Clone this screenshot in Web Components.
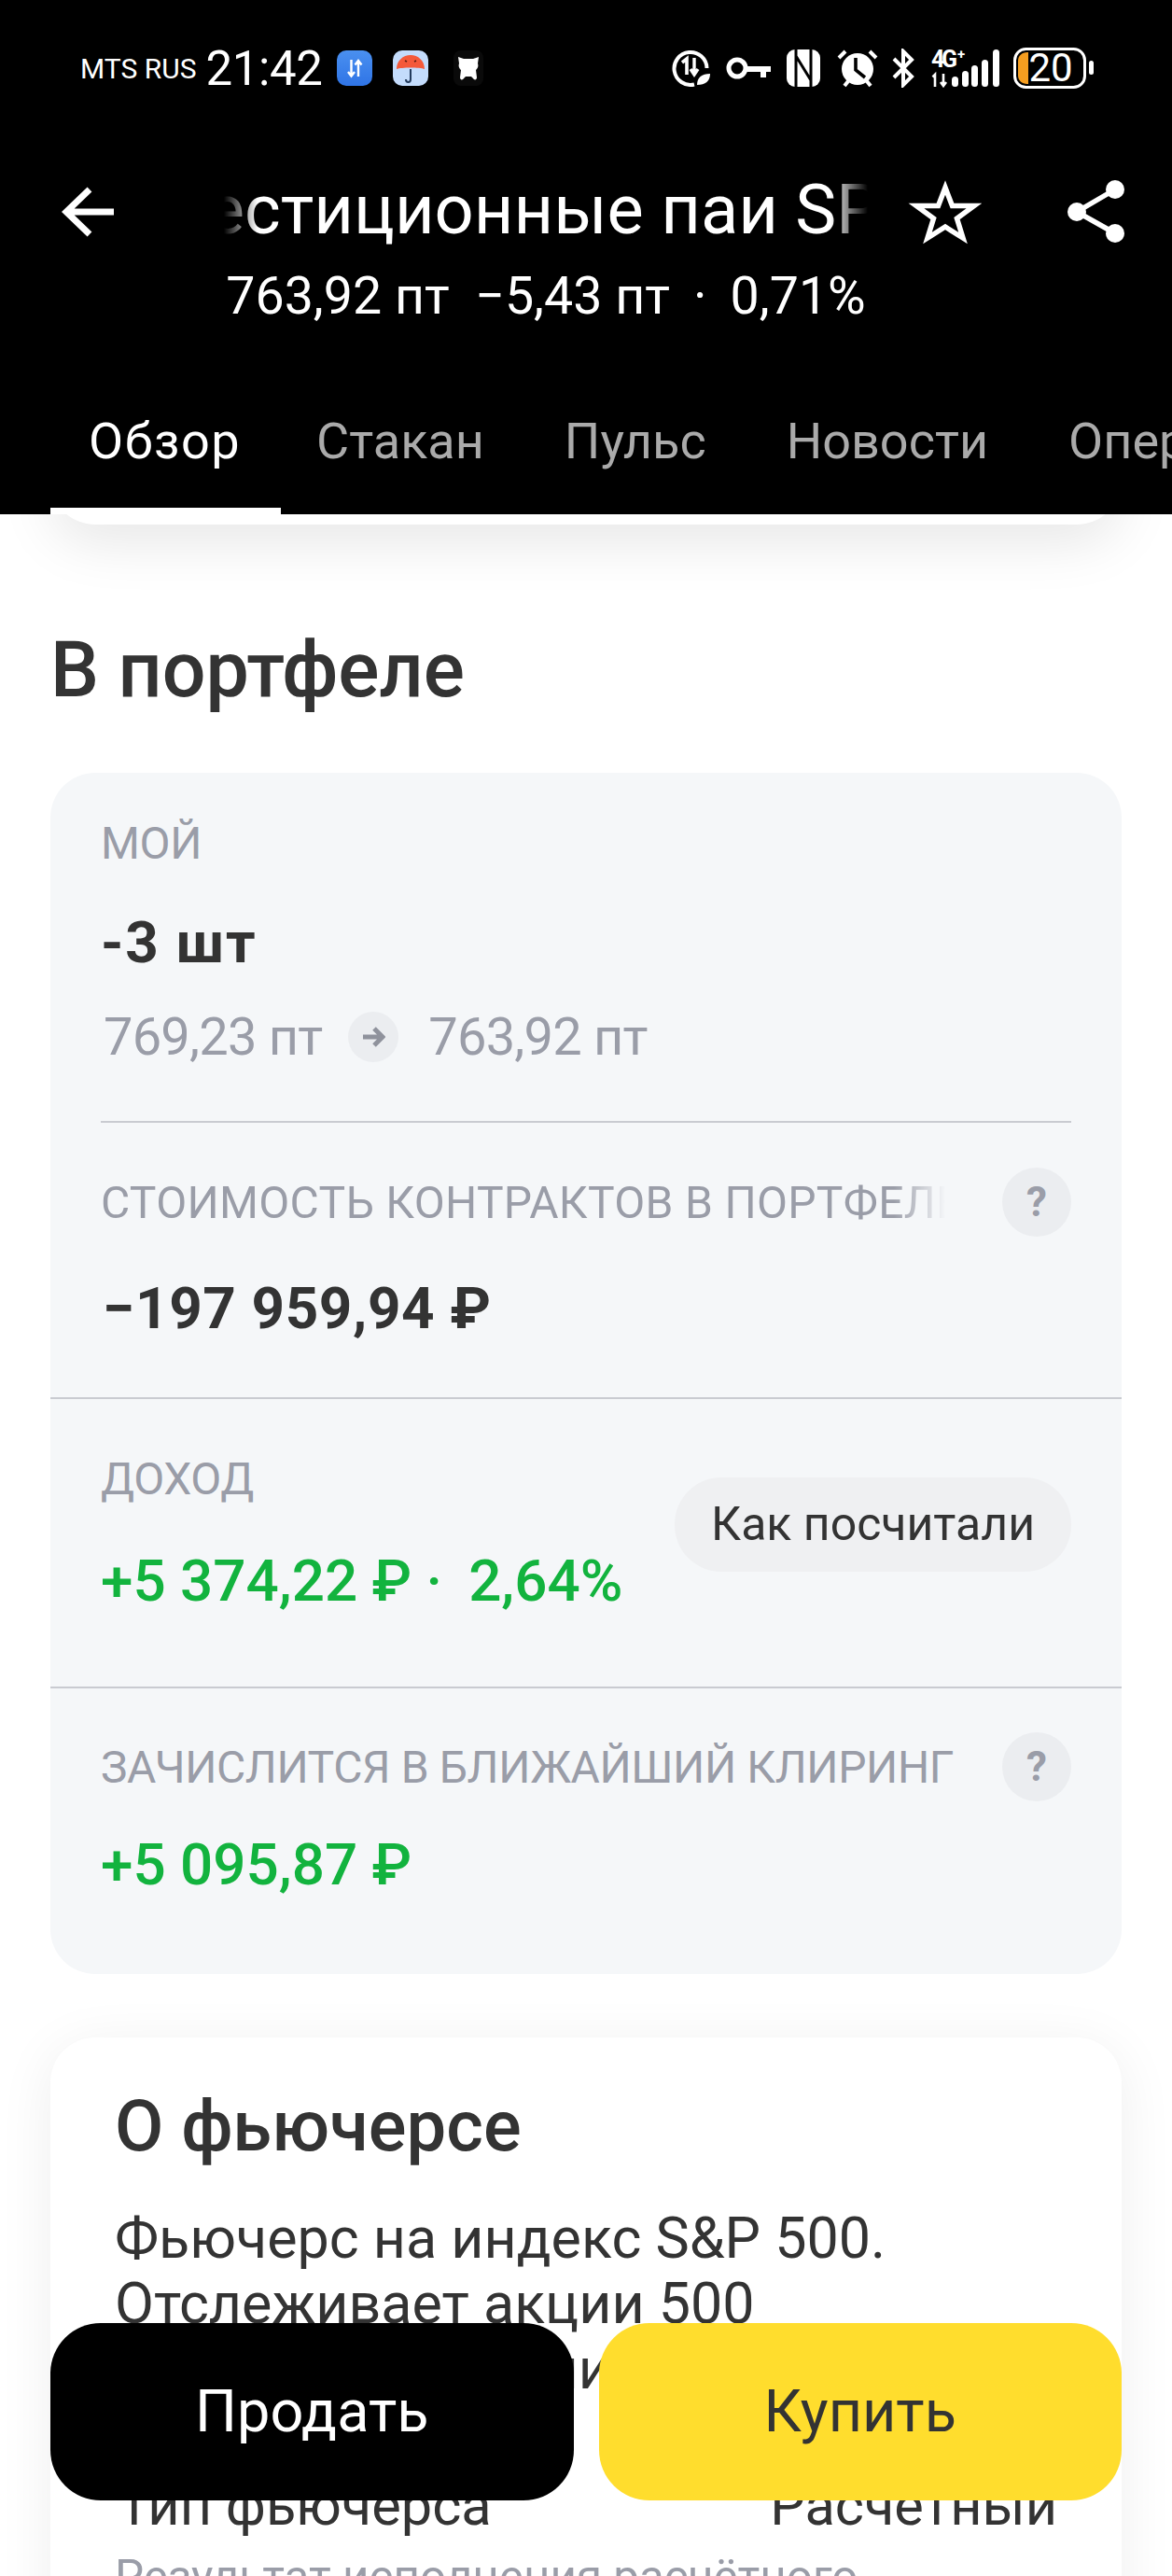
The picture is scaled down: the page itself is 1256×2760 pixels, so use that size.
<!DOCTYPE html>
<html lang="ru">
<head>
<meta charset="utf-8">
<title>Фьючерс</title>
<style>
    html, body { margin: 0; padding: 0; background: #fff; }
    body {
        width: 1256px;
        height: 2760px;
        overflow: hidden;
        position: relative;
        font-family: Roboto, "Noto Sans", sans-serif;
        color: #333;
    }
    main { display: block; }
</style>
</head>
<body>
<app-header></app-header>
<main>
    <card-tail></card-tail>
    <section-title>В портфеле</section-title>
    <portfolio-panel>
        <stat-row label="МОЙ" value="-3 шт" style="--top:47px;--gap:45px;--bottom:0px;--head:56px;--vls:1.8px">
            <price-move slot="extra" from="769,23 пт" to="763,92 пт"></price-move>
        </stat-row>
        <stat-row label="СТОИМОСТЬ КОНТРАКТОВ В ПОРТФЕЛЕ" value="−197 959,94 ₽" help fade divider="inset" style="--top:48px;--gap:43px;--bottom:61px;--head:74px;--vls:.6px;--vx:2px;--lls:.3px"></stat-row>
        <stat-row label="ДОХОД" value="+5 374,22 ₽ · &#8201;2,64%" tone="green" action="Как посчитали" divider="full" style="--top:57px;--gap:48px;--bottom:79px;--head:56px"></stat-row>
        <stat-row label="ЗАЧИСЛИТСЯ В БЛИЖАЙШИЙ КЛИРИНГ" value="+5 095,87 ₽" tone="green" help divider="full" style="--top:47px;--gap:34px;--bottom:83px;--head:74px"></stat-row>
    </portfolio-panel>
    <about-card></about-card>
</main>
<trade-bar></trade-bar>

<script>
// status bar on top of the black header
class StatusBar extends HTMLElement {
    connectedCallback() {
        this.attachShadow({ mode: 'open' });
        this.shadowRoot.innerHTML = `
            <style>
                :host { display: flex; align-items: center; height: 146px; padding: 0 84px 0 86px; color: #fff; box-sizing: border-box; }
                .carrier { font-size: 30px; margin-right: 10px; white-space: nowrap; }
                .time { font-size: 51px; margin-right: 16px; white-space: nowrap; letter-spacing: -0.4px; }
                .left { display: flex; align-items: center; flex: 1; }
                .right { display: flex; align-items: center; }
                svg { display: block; flex: none; }
            </style>
            <div class="left">
                <span class="carrier">MTS RUS</span>
                <span class="time">21:42</span>
                <svg width="38" height="38" viewBox="0 0 38 38" style="margin-right:22px">
                    <defs><linearGradient id="bl" x1="0" y1="0" x2="0" y2="1"><stop offset="0" stop-color="#4a90f0"/><stop offset="1" stop-color="#2f74e6"/></linearGradient></defs>
                    <rect width="38" height="38" rx="10" fill="url(#bl)"/>
                    <path d="M15.5 10v17M12 23l3.500 4.500L19 23" stroke="#fff" stroke-width="2.400" fill="none"/>
                    <path d="M23 28V11M19.500 15.500L23 11l3.500 4.500" stroke="#fff" stroke-width="2.400" fill="none"/>
                </svg>
                <svg width="38" height="38" viewBox="0 0 38 38" style="margin-right:27px">
                    <rect width="38" height="38" rx="10" fill="#c4dcfc"/>
                    <path d="M4 20C4 11 11 5 19 5s15 6 15 15c-5-2-25-2-30 0z" fill="#f4593a"/>
                    <path d="M19 20v11c0 4-5 4-5 0" stroke="#223a5c" stroke-width="2" fill="none"/>
                    <path d="M13 11l2 1M23 12l2-1" stroke="#5a1a10" stroke-width="1.600"/>
                </svg>
                <svg width="32" height="38" viewBox="0 0 32 38">
                    <rect width="32" height="38" rx="8" fill="#0a0a0a"/>
                    <path d="M3 6l6 2h10l6-2-1 7c1 3 0 5-2 7l1 8c0 3-3 3-4 1l-2-2h-6l-2 2c-1 2-4 2-4-1l1-8c-2-2-3-4-2-7z" fill="#fff" transform="translate(2 1)"/>
                </svg>
            </div>
            <div class="right">
                <svg width="42" height="40" viewBox="0 0 42 40" style="margin-right:16px">
                    <path d="M24 37.500A17.500 17.500 0 1 1 37.500 20" stroke="#fff" stroke-width="4" fill="none"/>
                    <path d="M11 14l5-4v17" stroke="#fff" stroke-width="3.600" fill="none"/>
                    <path d="M24 9v17M20 21l4 6 4-6" stroke="#fff" stroke-width="3.400" fill="none"/>
                    <path d="M27 38c0-8 5-12 14-12 0 8-5 12-14 12z" fill="#fff"/>
                </svg>
                <svg width="48" height="26" viewBox="0 0 48 26" style="margin-right:16px">
                    <circle cx="12" cy="13" r="9" stroke="#fff" stroke-width="5" fill="none"/>
                    <path d="M21 11h27v6h-5v6h-6v-6H21z" fill="#fff"/>
                </svg>
                <svg width="38" height="40" viewBox="0 0 38 40" style="margin-right:17px">
                    <rect x="1" y="0" width="36" height="40" rx="9" fill="#fff"/>
                    <path d="M11 0v40M27 0v40M11 7l16 26" stroke="#000" stroke-width="3" fill="none"/>
                </svg>
                <svg width="44" height="42" viewBox="0 0 44 42" style="margin-right:15px">
                    <circle cx="22" cy="22" r="17" fill="#fff"/>
                    <path d="M2 10l7-7M42 10l-7-7" stroke="#fff" stroke-width="4"/>
                    <path d="M8 40l4-5M36 40l-4-5" stroke="#fff" stroke-width="4"/>
                    <path d="M20 10v13l10 8" stroke="#000" stroke-width="3.600" fill="none"/>
                </svg>
                <svg width="24" height="42" viewBox="0 0 24 42" style="margin-right:18px">
                    <path d="M2 11l19 19-9 9V3l9 9L2 31" stroke="#fff" stroke-width="4" fill="none"/>
                </svg>
                <svg width="74" height="42" viewBox="0 0 74 42" style="margin-right:14px">
                    <text x="0" y="20" font-family="Roboto, sans-serif" font-size="25" font-weight="700" fill="#fff" textLength="28">4G</text>
                    <text x="28" y="11" font-family="Roboto, sans-serif" font-size="15" font-weight="700" fill="#fff">+</text>
                    <path d="M4 41V28l-2.500 2.500M13 27v13M10 36l3 4 3-4" stroke="#fff" stroke-width="2.600" fill="none"/>
                    <rect x="22" y="30" width="7" height="11" rx="3.500" fill="#fff"/>
                    <rect x="33" y="24" width="7" height="17" rx="3.500" fill="#fff"/>
                    <rect x="43" y="18" width="7" height="23" rx="3.500" fill="#fff"/>
                    <rect x="54" y="12" width="7" height="29" rx="3.500" fill="#fff"/>
                    <rect x="66" y="1" width="7" height="40" rx="3.500" fill="#fff"/>
                </svg>
                <svg width="86" height="44" viewBox="0 0 86 44">
                    <rect x="1.500" y="1.500" width="75" height="41" rx="12" fill="none" stroke="#fff" stroke-width="3"/>
                    <path d="M16 5H15c-6 0-10 4-10 9v16c0 5 4 9 10 9h1z" fill="#f59e20"/>
                    <text x="40" y="36" text-anchor="middle" font-family="Roboto, sans-serif" font-size="42" fill="#fff">20</text>
                    <rect x="81" y="14" width="5" height="15" rx="2.500" fill="#fff"/>
                </svg>
            </div>
        `;
    }
}

class AppHeader extends HTMLElement {
    connectedCallback() {
        this.attachShadow({ mode: 'open' });
        this.shadowRoot.innerHTML = `
            <style>
                :host { display: block; position: relative; z-index: 2; background: #000; color: #fff; height: 551px; overflow: hidden; }
                .bar { display: flex; align-items: flex-start; height: 270px; }
                .back { margin: 50px 0 0 66px; width: 60px; height: 60px; flex: none; }
                .titles { width: 690px; margin-left: 114px; flex: none; }
                .marquee {
                    height: 92px; line-height: 92px; overflow: hidden; white-space: nowrap; margin-top: 33px;
                    font-size: 74px;
                    -webkit-mask-image: linear-gradient(90deg, transparent 0, #000 36px, #000 650px, transparent 690px);
                    mask-image: linear-gradient(90deg, transparent 0, #000 36px, #000 650px, transparent 690px);
                }
                .marquee span { display: inline-block; margin-left: -155px; }
                .quote { font-size: 55.5px; line-height: 68px; margin-top: 13px; text-align: center; white-space: pre; width: 690px; }
                .star { margin: 44px 0 0 42px; flex: none; }
                .share { margin: 44px 0 0 92px; flex: none; }
            </style>
            <status-bar></status-bar>
            <div class="bar">
                <svg class="back" viewBox="0 0 60 60"><path d="M56 31H5M30 7L5 31l25 24" stroke="#fff" stroke-width="7" fill="none"/></svg>
                <div class="titles">
                    <div class="marquee"><span>Инвестиционные паи SPDR S&amp;P 500</span></div>
                    <div class="quote">763,92 пт  −5,43 пт&#8201; · &#8201;0,71%</div>
                </div>
                <svg class="star" width="80" height="72" viewBox="0 0 80 72"><path d="M41 11l7.500 19.500H72L53.500 44 60 65 41 53 22 65l6.500-21L10 30.500h23.500z" stroke="#fff" stroke-width="5.500" fill="none"/></svg>
                <svg class="share" width="62" height="72" viewBox="0 0 62 72"><path d="M51 13L10 37l41 23" stroke="#fff" stroke-width="5.500" fill="none"/><circle cx="51" cy="13" r="10" fill="#fff"/><circle cx="10" cy="37" r="10" fill="#fff"/><circle cx="51" cy="60" r="10" fill="#fff"/></svg>
            </div>
            <tab-strip></tab-strip>
        `;
    }
}

class TabStrip extends HTMLElement {
    connectedCallback() {
        this.attachShadow({ mode: 'open' });
        const tabs = ['Обзор', 'Стакан', 'Пульс', 'Новости', 'Операции'];
        this.shadowRoot.innerHTML = `
            <style>
                :host { display: flex; padding-left: 54px; height: 135px; white-space: nowrap; box-sizing: border-box; overflow: hidden; }
                .tab { padding: 0 43px; font-size: 54px; line-height: 113px; height: 135px; color: #aaa; box-sizing: border-box; flex: none; }
                .tab.on { color: #fff; border-bottom: 7px solid #fff; letter-spacing: 1.500px; padding: 0 43px 0 41px; margin-right: -5px; }
            </style>
            ${tabs.map((t, i) => `<div class="tab ${i === 0 ? 'on' : ''}">${t}</div>`).join('')}
        `;
    }
}

// bottom edge of the card scrolled away under the header
class CardTail extends HTMLElement {
    connectedCallback() {
        this.attachShadow({ mode: 'open' });
        this.shadowRoot.innerHTML = `
            <style>
                :host {
                    display: block; height: 70px; margin: -59px 54px 0; background: #fff;
                    border-radius: 0 0 48px 48px; box-shadow: 0 18px 60px rgba(0,0,0,.1);
                }
            </style>
        `;
    }
}

class SectionTitle extends HTMLElement {
    connectedCallback() {
        this.attachShadow({ mode: 'open' });
        this.shadowRoot.innerHTML = `
            <style>
                :host { display: block; margin: 106px 0 0 54px; height: 160px; font-size: 82.5px; line-height: 100px; font-weight: 500; color: #333; }
            </style>
            <slot></slot>
        `;
    }
}

class PortfolioPanel extends HTMLElement {
    connectedCallback() {
        this.attachShadow({ mode: 'open' });
        this.shadowRoot.innerHTML = `
            <style>
                :host { display: block; margin: 0 54px; background: #f5f7f9; border-radius: 48px; box-sizing: border-box; overflow: hidden; }
            </style>
            <slot></slot>
        `;
    }
}

class StatRow extends HTMLElement {
    connectedCallback() {
        this.attachShadow({ mode: 'open' });
        const label = this.getAttribute('label') || '';
        const value = this.getAttribute('value') || '';
        const help = this.hasAttribute('help');
        const fade = this.hasAttribute('fade');
        const action = this.getAttribute('action');
        const divider = this.getAttribute('divider');
        const tone = this.getAttribute('tone');
        this.shadowRoot.innerHTML = `
            <style>
                :host { display: block; }
                .line { height: 2px; background: #c9cbd1; }
                .line.inset { margin: 0 54px; }
                .body { display: flex; padding: var(--top) 54px var(--bottom); }
                .main { flex: 1; min-width: 0; }
                .head { display: flex; align-items: center; height: var(--head); }
                .label { flex: 1; min-width: 0; font-size: 48px; color: #9a9da8; white-space: nowrap; overflow: hidden; letter-spacing: var(--lls, -0.400px); }
                .label.fade {
                    flex: none; width: 905px;
                    -webkit-mask-image: linear-gradient(90deg, #000 850px, transparent 905px);
                    mask-image: linear-gradient(90deg, #000 850px, transparent 905px);
                }
                .help {
                    margin-left: auto; width: 74px; height: 74px; border-radius: 50%; background: #ebedf0; color: #9a9da8;
                    display: flex; align-items: center; justify-content: center; font-size: 44px; font-weight: 700; flex: none;
                }
                .value { margin-top: var(--gap); margin-left: var(--vx, 0); font-size: 62px; line-height: 68px; font-weight: 700; color: #333; white-space: nowrap; letter-spacing: var(--vls, 0); }
                .value.green { color: #12b33e; font-weight: 500; }
                .action {
                    align-self: flex-start; margin-top: 27px; flex: none; height: 101px; line-height: 101px; padding: 0 39px; border-radius: 50px;
                    background: #eff0f2; font-size: 50px; color: #333; white-space: nowrap; margin-left: -300px;
                }
            </style>
            ${divider ? `<div class="line ${divider === 'inset' ? 'inset' : ''}"></div>` : ''}
            <div class="body">
                <div class="main">
                    <div class="head">
                        <div class="label ${fade ? 'fade' : ''}">${label}</div>
                        ${help ? '<div class="help">?</div>' : ''}
                    </div>
                    <div class="value ${tone || ''}">${value}</div>
                    <slot name="extra"></slot>
                </div>
                ${action ? `<div class="action">${action}</div>` : ''}
            </div>
        `;
    }
}

class PriceMove extends HTMLElement {
    connectedCallback() {
        this.attachShadow({ mode: 'open' });
        this.shadowRoot.innerHTML = `
            <style>
                :host { display: flex; align-items: center; margin-top: 33px; height: 68px; padding: 0 0 56px 3px; font-size: 56px; letter-spacing: -0.800px; color: #9a9da8; white-space: nowrap; }
                .dot { width: 54px; height: 54px; border-radius: 50%; background: #ebedf0; margin: 0 32px 0 28px; display: flex; align-items: center; justify-content: center; }
            </style>
            <span>${this.getAttribute('from')}</span>
            <span class="dot">
                <svg width="26" height="24" viewBox="0 0 26 24"><path d="M2 12h21M14 3l9 9-9 9" stroke="#8f929c" stroke-width="5" fill="none"/></svg>
            </span>
            <span>${this.getAttribute('to')}</span>
        `;
    }
}

class AboutCard extends HTMLElement {
    connectedCallback() {
        this.attachShadow({ mode: 'open' });
        this.shadowRoot.innerHTML = `
            <style>
                :host {
                    display: block; margin: 68px 54px 0; padding: 49px 69px 0; background: #fff; border-radius: 48px;
                    box-shadow: 0 10px 60px rgba(0,0,0,.07); height: 900px; box-sizing: border-box; color: #333;
                }
                h2 { margin: 0; font-size: 76px; line-height: 92px; font-weight: 500; }
                p { margin: 39px 0 0; font-size: 61px; line-height: 70px; }
                .row { display: flex; justify-content: space-between; margin-top: 7px; padding: 0 0 0 3px; font-size: 59.5px; line-height: 70px; }
                small { display: block; font-size: 49.400px; line-height: 60px; color: #9a9da8; margin-top: 11px; }
            </style>
            <h2>О фьючерсе</h2>
            <p>Фьючерс на индекс S&amp;P 500.<br>Отслеживает акции 500<br>крупнейших публичных<br>компаний США</p>
            <div class="row"><span>Тип фьючерса</span><span>Расчётный</span></div>
            <small>Результат исполнения расчётного</small>
        `;
    }
}

// sell and buy buttons float over the page
class TradeBar extends HTMLElement {
    connectedCallback() {
        this.attachShadow({ mode: 'open' });
        this.shadowRoot.innerHTML = `
            <style>
                :host { display: flex; gap: 27px; position: absolute; left: 54px; right: 54px; top: 2489px; z-index: 3; }
                .btn { flex: 1; height: 190px; line-height: 190px; border-radius: 54px; text-align: center; font-size: 63px; }
                .sell { background: #000; color: #fff; }
                .buy { background: #ffdd2d; color: #333; }
            </style>
            <div class="btn sell">Продать</div>
            <div class="btn buy">Купить</div>
        `;
    }
}

customElements.define('status-bar', StatusBar);
customElements.define('app-header', AppHeader);
customElements.define('tab-strip', TabStrip);
customElements.define('card-tail', CardTail);
customElements.define('section-title', SectionTitle);
customElements.define('portfolio-panel', PortfolioPanel);
customElements.define('stat-row', StatRow);
customElements.define('price-move', PriceMove);
customElements.define('about-card', AboutCard);
customElements.define('trade-bar', TradeBar);
</script>
</body>
</html>
